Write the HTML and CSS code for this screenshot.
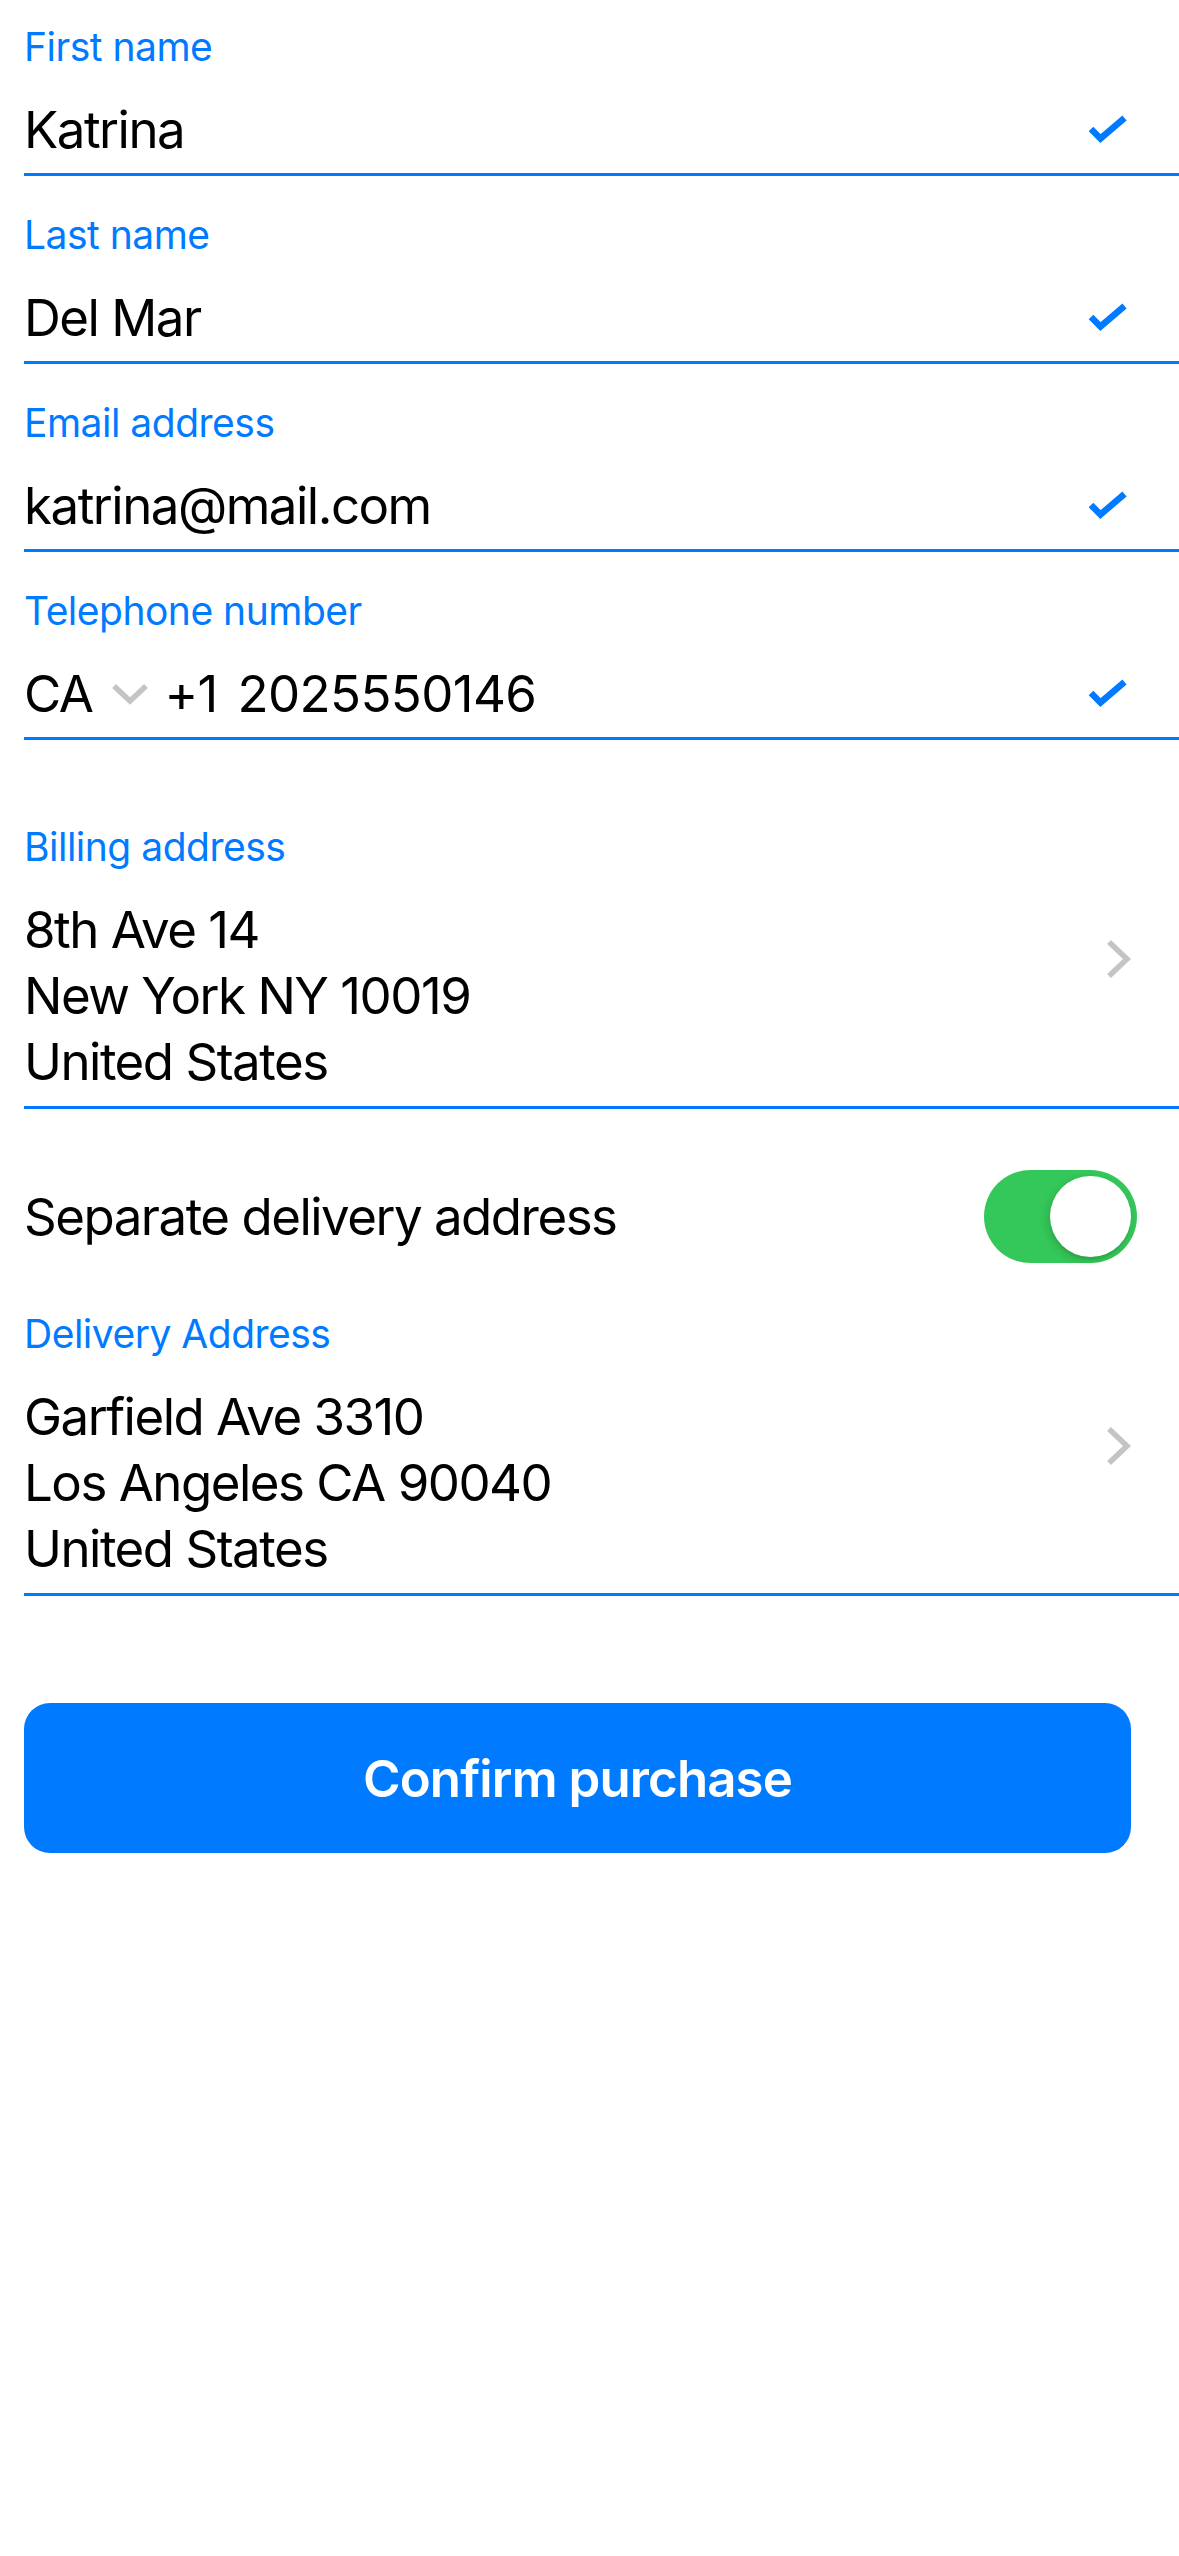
FILE: index.html
```html
<!DOCTYPE html>
<html lang="en">
<head>
<meta charset="utf-8">
<title>Checkout</title>
<link rel="stylesheet" href="styles.css">
</head>
<body>
<main class="form">
  <div class="field">
    <div class="field-main">
      <div class="label">First name</div>
      <div class="value-row">
        <span class="value">Katrina</span>
        <svg class="check" viewBox="0 0 40 30" width="40" height="30"><polyline points="3,14 12.5,23.5 36.5,3" fill="none" stroke="#007AFF" stroke-width="6.5"/></svg>
      </div>
    </div>
  </div>
  <div class="field">
    <div class="field-main">
      <div class="label">Last name</div>
      <div class="value-row">
        <span class="value">Del Mar</span>
        <svg class="check" viewBox="0 0 40 30" width="40" height="30"><polyline points="3,14 12.5,23.5 36.5,3" fill="none" stroke="#007AFF" stroke-width="6.5"/></svg>
      </div>
    </div>
  </div>
  <div class="field">
    <div class="field-main">
      <div class="label">Email address</div>
      <div class="value-row">
        <span class="value">katrina@mail.com</span>
        <svg class="check" viewBox="0 0 40 30" width="40" height="30"><polyline points="3,14 12.5,23.5 36.5,3" fill="none" stroke="#007AFF" stroke-width="6.5"/></svg>
      </div>
    </div>
  </div>
  <div class="field">
    <div class="field-main">
      <div class="label">Telephone number</div>
      <div class="value-row">
        <span class="value phone">
          <span class="cc">CA</span>
          <svg class="chev-down" viewBox="0 0 38 24" width="38" height="24"><polyline points="3,4 19,19 35,4" fill="none" stroke="#C4C4C6" stroke-width="5.5"/></svg>
          <span class="num">+1 2025550146</span>
        </span>
        <svg class="check" viewBox="0 0 40 30" width="40" height="30"><polyline points="3,14 12.5,23.5 36.5,3" fill="none" stroke="#007AFF" stroke-width="6.5"/></svg>
      </div>
    </div>
  </div>

  <div class="field address billing">
    <div class="field-main">
      <div class="label">Billing address</div>
      <div class="value multi">8th Ave 14<br>New York NY 10019<br>United States</div>
    </div>
    <svg class="chev-right" viewBox="0 0 26 40" width="26" height="40"><polyline points="3,3 21,20 3,37" fill="none" stroke="#C4C4C6" stroke-width="5.5"/></svg>
  </div>

  <div class="toggle-row">
    <span class="value">Separate delivery address</span>
    <div class="switch on"><div class="knob"></div></div>
  </div>

  <div class="field address delivery">
    <div class="field-main">
      <div class="label">Delivery Address</div>
      <div class="value multi">Garfield Ave 3310<br>Los Angeles CA 90040<br>United States</div>
    </div>
    <svg class="chev-right" viewBox="0 0 26 40" width="26" height="40"><polyline points="3,3 21,20 3,37" fill="none" stroke="#C4C4C6" stroke-width="5.5"/></svg>
  </div>

  <button class="confirm">Confirm purchase</button>
</main>
</body>
</html>
```

FILE: styles.css
```css
* { box-sizing: border-box; }

html, body {
  margin: 0;
  padding: 0;
  background: #ffffff;
}

body {
  font-family: Inter, "Noto Sans", "Liberation Sans", sans-serif;
  color: #000000;
  width: 1179px;
  min-height: 2556px;
}

.form {
  display: flex;
  flex-direction: column;
  padding-top: 23px;
}

.field {
  display: flex;
  align-items: center;
  margin-left: 24px;
  border-bottom: 3px solid #007AFF;
  padding-bottom: 10px;
}

.field + .field {
  margin-top: 35px;
}

.field-main {
  flex: 1;
  display: flex;
  flex-direction: column;
}

.label {
  font-size: 39px;
  line-height: 48px;
  color: #007AFF;
  letter-spacing: -0.5px;
}

.value-row {
  display: flex;
  align-items: center;
  margin-top: 26px;
}

.value {
  font-size: 51px;
  line-height: 66px;
  letter-spacing: -1.5px;
  color: #000000;
}

.value-row .value {
  flex: 1;
}

.check {
  display: block;
  margin-right: 51px;
}

.phone {
  display: flex;
  align-items: center;
}

.phone .num {
  letter-spacing: -0.6px;
  word-spacing: 6px;
}

.chev-down {
  display: block;
  margin: 0 15px 0 19px;
}

.field.billing {
  margin-top: 83px !important;
}

.address {
  padding-bottom: 11px;
}

.address .multi {
  margin-top: 26px;
}

.chev-right {
  display: block;
  margin-right: 47px;
}

.toggle-row {
  display: flex;
  align-items: center;
  justify-content: space-between;
  margin-top: 61px;
  padding-left: 24px;
  padding-right: 42px;
}

.switch {
  width: 153px;
  height: 93px;
  border-radius: 47px;
  background: #34C759;
  display: flex;
  align-items: center;
  justify-content: flex-end;
  padding: 6px;
}

.knob {
  width: 81px;
  height: 81px;
  border-radius: 50%;
  background: #ffffff;
  box-shadow: -2px 3px 8px rgba(0, 0, 0, 0.15), 0 3px 1px rgba(0, 0, 0, 0.06);
}

.field.delivery {
  margin-top: 47px !important;
}

.confirm {
  margin: 107px 48px 0 24px;
  height: 150px;
  border: none;
  border-radius: 26px;
  background: #007AFF;
  color: #ffffff;
  font-family: Inter, "Noto Sans", "Liberation Sans", sans-serif;
  font-size: 51px;
  font-weight: 600;
  letter-spacing: -0.9px;
  padding: 0;
}
```
